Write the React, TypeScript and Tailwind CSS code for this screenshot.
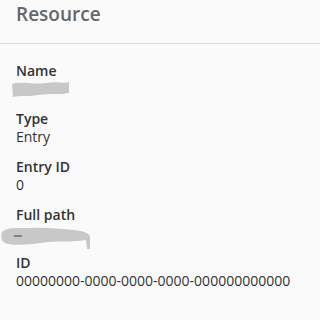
const fields = [
  { label: "Name", value: null, redact: "name" },
  { label: "Type", value: "Entry" },
  { label: "Entry ID", value: "0" },
  { label: "Full path", value: null, redact: "path" },
  { label: "ID", value: "00000000-0000-0000-0000-000000000000" },
];

function NameScribble() {
  return (
    <svg width="58" height="18" viewBox="0 0 58 18" className="block -ml-[4px]">
      <path
        d="M0 4 C10 1 22 5 34 3 C44 1 52 4 57 2 L57 13 C48 15 38 13 26 15 C16 17 8 15 1 17 Z"
        fill="#c8c8c8"
      />
    </svg>
  );
}

function PathScribble() {
  return (
    <svg width="92" height="26" viewBox="0 0 92 26" className="block -ml-[16px]">
      <path
        d="M2 8 C6 3 18 4 30 4 C44 3 60 5 74 6 C84 7 88 9 90 12 L90 25 L87 25 L86 16 C76 18 62 17 48 18 C34 20 18 22 8 20 C2 19 0 14 2 8 Z"
        fill="#c8c8c8"
      />
      <path d="M14 12 L22 12" stroke="#555" strokeWidth="1.2" />
    </svg>
  );
}

export default function App() {
  return (
    <div className="w-[320px] h-[320px] bg-[#fafafa] font-['Open_Sans',sans-serif] overflow-hidden">
      <div className="h-[44px] px-4 flex items-center border-b border-[#dddddd]">
        <h1 className="text-[19px] leading-none text-[#666666] font-semibold -mt-[14px]">Resource</h1>
      </div>
      <div className="px-4 pt-[18px] flex flex-col gap-[12px]">
        {fields.map((f) => (
          <div key={f.label} className="flex flex-col">
            <div className="text-[14px] leading-[18px] font-semibold text-[#333333]">{f.label}</div>
            {f.redact === "name" ? (
              <div className="h-[18px] flex items-center">
                <NameScribble />
              </div>
            ) : f.redact === "path" ? (
              <div className="h-[18px] flex items-start">
                <PathScribble />
              </div>
            ) : (
              <div className="text-[14px] leading-[18px] text-[#333333]">{f.value}</div>
            )}
          </div>
        ))}
      </div>
    </div>
  );
}
